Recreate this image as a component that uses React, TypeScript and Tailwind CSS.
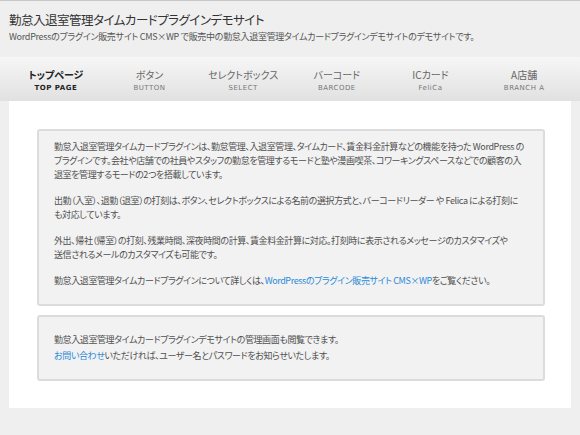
import React from 'react';

const navItems = [
  { ja: 'トップページ', en: 'TOP PAGE', active: true },
  { ja: 'ボタン', en: 'BUTTON' },
  { ja: 'セレクトボックス', en: 'SELECT' },
  { ja: 'バーコード', en: 'BARCODE' },
  { ja: 'ICカード', en: 'FeliCa' },
  { ja: 'A店舗', en: 'BRANCH A' },
];

function Link({ children }: { children: React.ReactNode }) {
  return <a href="#" className="text-[#2b8ad8] no-underline">{children}</a>;
}

export default function App() {
  return (
    <div
      className="min-h-[435px] bg-[#efefef] text-[#505050] [font-family:'Noto_Sans_CJK_JP','Liberation_Sans',sans-serif] [font-feature-settings:'palt']"
    >
      {/* Header */}
      <header className="border-t border-[#c8c8c8] px-[9px] pt-[10px] h-[57px]">
        <h1 className="text-[12.5px] leading-[18px] tracking-[-0.5px] text-[#333]">勤怠入退室管理タイムカードプラグインデモサイト</h1>
        <p className="mt-[1px] text-[9px] leading-[14px] tracking-[-0.3px] text-[#555]">
          WordPressのプラグイン販売サイト CMS×WP で販売中の勤怠入退室管理タイムカードプラグインデモサイトのデモサイトです。
        </p>
      </header>

      {/* Global nav */}
      <nav className="h-[44px] bg-gradient-to-b from-[#f6f6f6] to-[#e1e1e1]">
        <ul className="mx-[9px] grid grid-cols-6 pt-[11px]">
          {navItems.map((item) => (
            <li key={item.en} className="flex flex-col items-center">
              <span
                className={
                  item.active
                    ? 'text-[10px] leading-[14px] font-bold text-[#222]'
                    : 'text-[10px] leading-[14px] text-[#666]'
                }
              >
                {item.ja}
              </span>
              <span
                className={
                  item.active
                    ? 'mt-[1px] text-[7px] leading-[10px] font-bold tracking-[0.5px] text-[#222] [font-family:Verdana,"DejaVu_Sans",sans-serif]'
                    : 'mt-[1px] text-[7px] leading-[10px] tracking-[0.5px] text-[#777] [font-family:Verdana,"DejaVu_Sans",sans-serif]'
                }
              >
                {item.en}
              </span>
            </li>
          ))}
        </ul>
      </nav>

      {/* Content */}
      <main className="mx-[9px] bg-white pt-[28px] pb-[27px] pl-[28px] pr-[26px]">
        <div className="rounded-[3px] border-2 border-[#dcdcdc] bg-[#f2f2f2] pl-[15px] pr-[8px] pt-[9px] pb-[16px] text-[9px] leading-[14px] tracking-[-0.4px]">
          <p>
            勤怠入退室管理タイムカードプラグインは、勤怠管理、入退室管理、タイムカード、賃金料金計算などの機能を持った WordPress の
            <br />
            プラグインです。会社や店舗での社員やスタッフの勤怠を管理するモードと塾や漫画喫茶、コワーキングスペースなどでの顧客の入
            <br />
            退室を管理するモードの2つを搭載しています。
          </p>
          <p className="mt-[12px]">
            出勤（入室）、退勤（退室）の打刻は、ボタン、セレクトボックスによる名前の選択方式と、バーコードリーダー や Felica による打刻に
            <br />
            も対応しています。
          </p>
          <p className="mt-[12px]">
            外出、帰社（帰室）の打刻、残業時間、深夜時間の計算、賃金料金計算に対応。打刻時に表示されるメッセージのカスタマイズや
            <br />
            送信されるメールのカスタマイズも可能です。
          </p>
          <p className="mt-[12px]">
            勤怠入退室管理タイムカードプラグインについて詳しくは、<Link>WordPressのプラグイン販売サイト CMS×WP</Link>をご覧ください。
          </p>
        </div>

        <div className="mt-[9px] rounded-[3px] border-2 border-[#dcdcdc] bg-[#f2f2f2] pl-[15px] pr-[8px] py-[15px] text-[9px] leading-[16px] tracking-[-0.4px]">
          <p>
            勤怠入退室管理タイムカードプラグインデモサイトの管理画面も閲覧できます。
            <br />
            <Link>お問い合わせ</Link>いただければ、ユーザー名とパスワードをお知らせいたします。
          </p>
        </div>
      </main>
    </div>
  );
}
